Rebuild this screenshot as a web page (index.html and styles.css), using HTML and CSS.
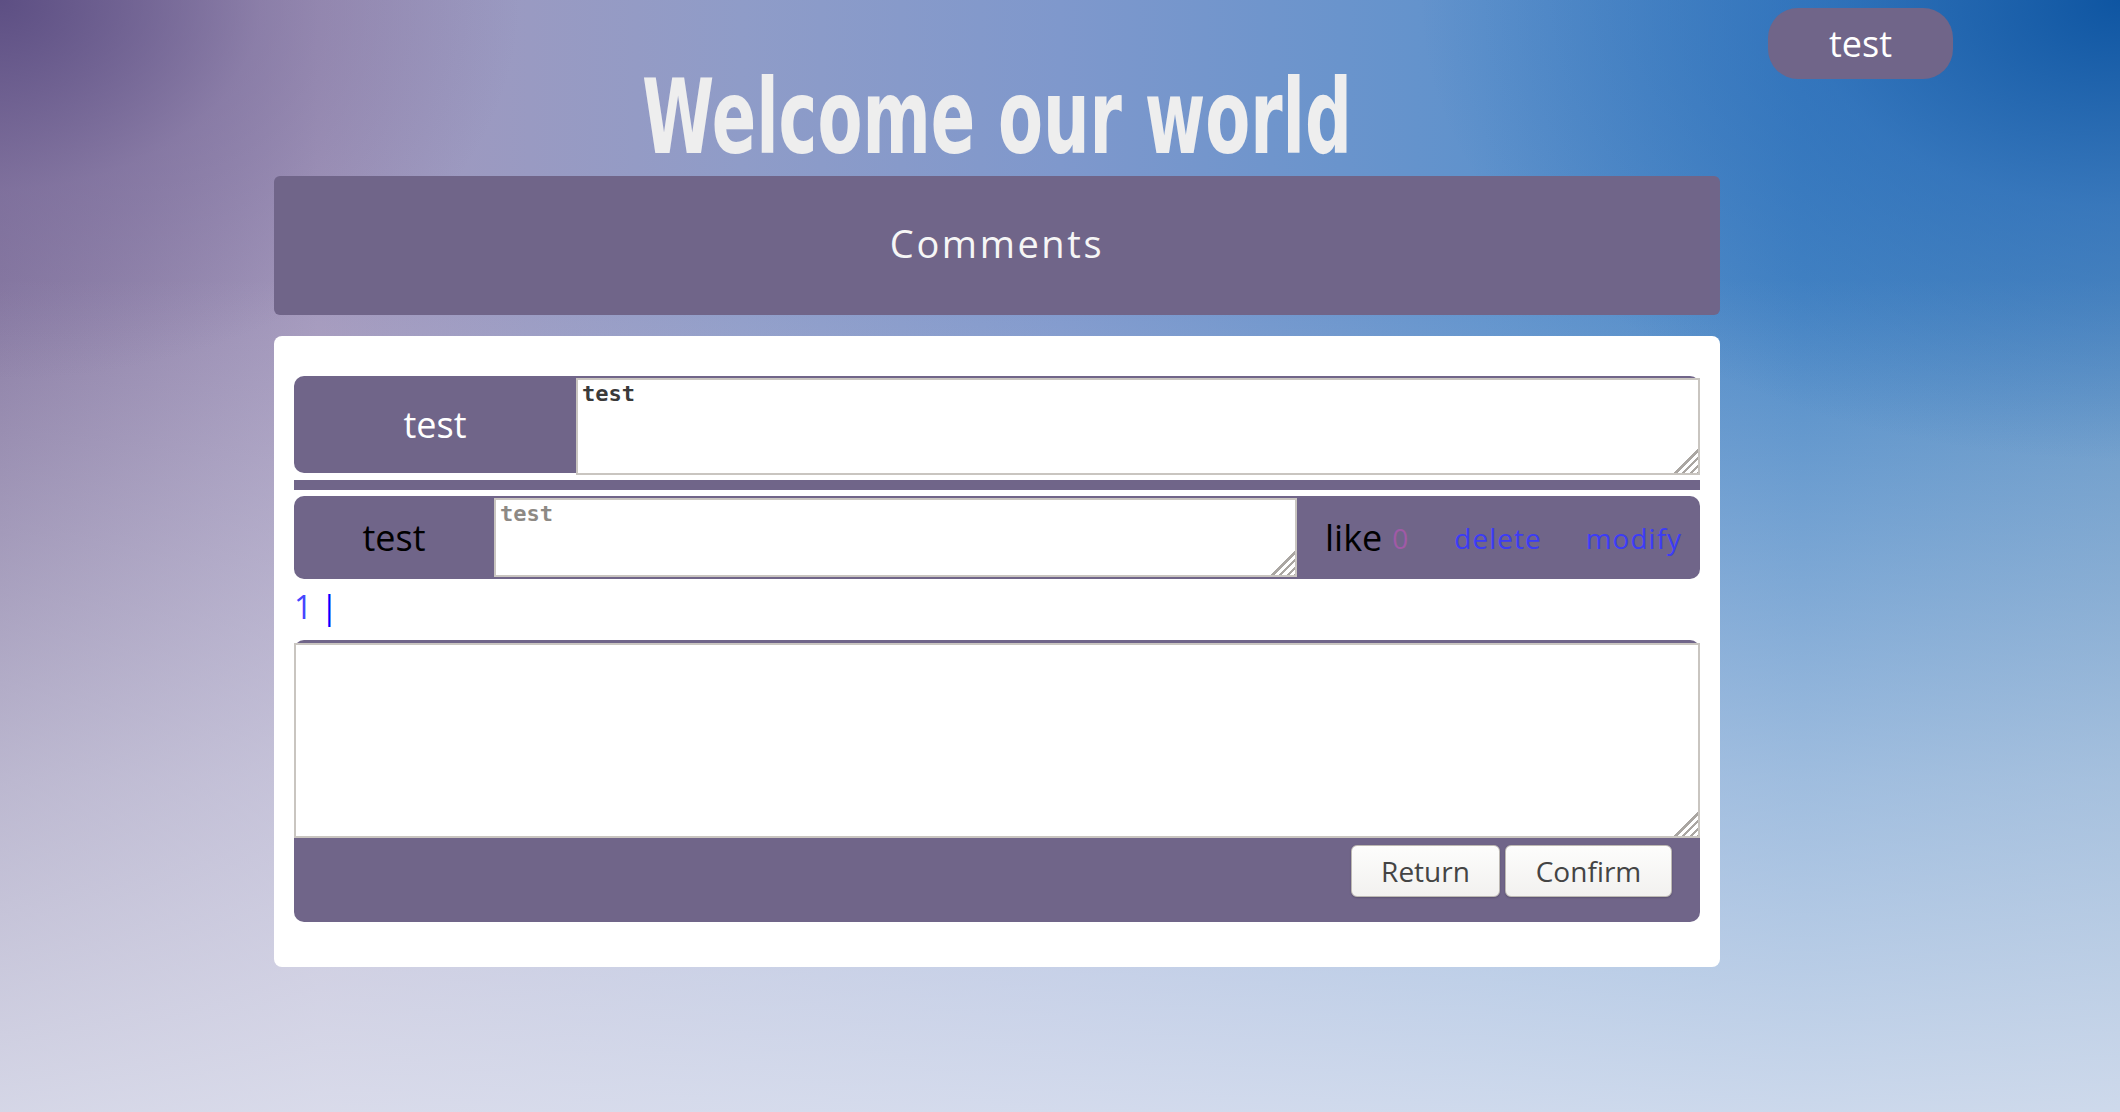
FILE: index.html
```html
<!DOCTYPE html>
<html>
<head>
<meta charset="utf-8">
<title>Comments</title>
<link rel="stylesheet" href="styles.css">
</head>
<body>
<div class="page">
  <main class="main">
    <h1 class="title"><span class="title-text">Welcome our world</span></h1>
    <div class="header">Comments</div>
    <section class="panel">
      <div class="row row-first">
        <div class="label label-wide">test</div>
        <div class="field field-first">
          <textarea class="box box-first">test</textarea>
          <span class="grip"></span>
        </div>
      </div>
      <div class="sep"></div>
      <div class="row row-second">
        <div class="label label-narrow">test</div>
        <div class="field field-second">
          <textarea class="box box-second" readonly>test</textarea>
          <span class="grip"></span>
        </div>
        <div class="actions">
          <span class="like">like</span>
          <span class="count">0</span>
          <a class="link link-delete">delete</a>
          <a class="link link-modify">modify</a>
        </div>
      </div>
      <div class="pager"><span class="page-num">1</span> <span class="page-bar">|</span></div>
      <div class="compose">
        <div class="field field-compose">
          <textarea class="box box-compose"></textarea>
          <span class="grip"></span>
        </div>
        <div class="compose-bar">
          <button class="btn btn-return">Return</button>
          <button class="btn btn-confirm">Confirm</button>
        </div>
      </div>
    </section>
  </main>
  <aside class="aside">
    <div class="user">test</div>
  </aside>
</div>
</body>
</html>
```
FILE: styles.css
```css
html, body {
  margin: 0;
  height: 100%;
}
body {
  font-family: "Open Sans", "Noto Sans", sans-serif;
  background:
    radial-gradient(ellipse 700px 460px at 100% 0%, rgba(10, 82, 160, 0.95) 0%, rgba(30, 100, 180, 0.55) 45%, rgba(40, 110, 190, 0) 100%),
    radial-gradient(ellipse 520px 380px at 0% 0%, rgba(88, 74, 128, 0.9) 0%, rgba(110, 95, 145, 0.4) 50%, rgba(120, 105, 150, 0) 100%),
    linear-gradient(to bottom, rgba(232, 236, 245, 0) 0%, rgba(232, 236, 245, 0) 25%, rgba(228, 232, 243, 0.55) 70%, rgba(226, 230, 242, 0.85) 100%),
    linear-gradient(to right, #8a7ca4 0%, #a398bc 15%, #8f9cc8 35%, #7f98cc 50%, #5f92cc 70%, #4a88c6 85%, #5a90c4 100%);
  overflow: hidden;
}
.page {
  display: flex;
  align-items: flex-start;
  padding-left: 274px;
}
.main {
  width: 1446px;
  flex: none;
}
.title {
  margin: 0;
  height: 176px;
  box-sizing: border-box;
  padding-top: 65px;
  line-height: 104px;
  text-align: center;
  font-family: "Liberation Sans Narrow", "DejaVu Sans Condensed", sans-serif;
  font-weight: bold;
  font-size: 104px;
  color: #eeeeee;
  white-space: nowrap;
}
.title-text {
  display: inline-block;
  transform: scaleX(0.7);
  transform-origin: center;
}
.header {
  height: 139px;
  box-sizing: border-box;
  padding-bottom: 6px;
  background: #706589;
  border-radius: 6px;
  display: flex;
  align-items: center;
  justify-content: center;
  color: #f6f6f6;
  font-size: 38px;
  letter-spacing: 2.6px;
}
.panel {
  margin-top: 21px;
  background: #ffffff;
  border-radius: 8px;
  padding: 40px 20px 45px;
}
.row {
  display: flex;
  align-items: flex-start;
  background: #706589;
  border-radius: 10px;
}
.row-first {
  height: 97px;
}
.row-second {
  height: 83px;
  margin-top: 6px;
}
.label {
  flex: none;
  display: flex;
  align-items: center;
  justify-content: center;
  font-size: 36px;
  height: 100%;
}
.label-wide {
  width: 282px;
  color: #ffffff;
}
.label-narrow {
  width: 200px;
  color: #000000;
}
.field {
  position: relative;
}
.field-first {
  flex: 1;
  margin-top: 2px;
}
.field-second {
  flex: none;
  width: 803px;
  margin-top: 2px;
}
.grip {
  position: absolute;
  right: 2px;
  bottom: 2px;
  width: 26px;
  height: 26px;
  background: repeating-linear-gradient(135deg, rgba(0, 0, 0, 0) 0 3px, #aaa6a2 3px 5.5px);
  clip-path: polygon(100% 0, 100% 100%, 0 100%);
  pointer-events: none;
}
.box {
  display: block;
  width: 100%;
  box-sizing: border-box;
  margin: 0;
  border: 2px solid #c9c5c0;
  background: #ffffff;
  font-family: "DejaVu Sans Mono", "Liberation Mono", monospace;
  font-weight: bold;
  font-size: 22px;
  line-height: 26px;
  padding: 1px 4px;
  outline: none;
  resize: none;
}
.box-first {
  height: 97px;
  color: #3a3a3a;
}
.box-second {
  height: 79px;
  color: #8d8984;
}
.sep {
  height: 10px;
  margin-top: 7px;
  background: #706589;
}
.actions {
  flex: 1;
  height: 100%;
  display: flex;
  align-items: center;
  padding-left: 28px;
}
.like {
  font-size: 36px;
  color: #000000;
}
.count {
  font-size: 28px;
  color: #a05aa6;
  margin-left: 10px;
}
.link {
  font-size: 28px;
  color: #3c3cf6;
  letter-spacing: 1px;
  cursor: pointer;
}
.link-delete {
  margin-left: 46px;
}
.link-modify {
  margin-left: 44px;
}
.pager {
  margin-top: 8px;
  font-size: 32px;
  line-height: 40px;
}
.page-num {
  color: #4646ff;
}
.page-bar {
  color: #0000ff;
}
.compose {
  margin-top: 13px;
  background: #706589;
  border-radius: 10px;
  padding-top: 3px;
}
.box-compose {
  height: 195px;
}
.compose-bar {
  height: 84px;
  box-sizing: border-box;
  padding: 7px 28px 0 0;
  display: flex;
  justify-content: flex-end;
  align-items: flex-start;
  gap: 5px;
}
.btn {
  height: 52px;
  padding: 0 26px;
  border: 1px solid #bdb9b3;
  border-radius: 6px;
  background: linear-gradient(to bottom, #fdfdfc 0%, #f2f1ef 100%);
  box-shadow: 0 1px 2px rgba(0, 0, 0, 0.2);
  font-family: "Open Sans", "Noto Sans", sans-serif;
  font-size: 28px;
  color: #444444;
}
.btn-return {
  width: 149px;
}
.btn-confirm {
  width: 167px;
}
.aside {
  margin-left: 48px;
  padding-top: 8px;
}
.user {
  width: 185px;
  height: 71px;
  border-radius: 30px;
  background: #706589;
  color: #ffffff;
  font-size: 36px;
  display: flex;
  align-items: center;
  justify-content: center;
}
```
